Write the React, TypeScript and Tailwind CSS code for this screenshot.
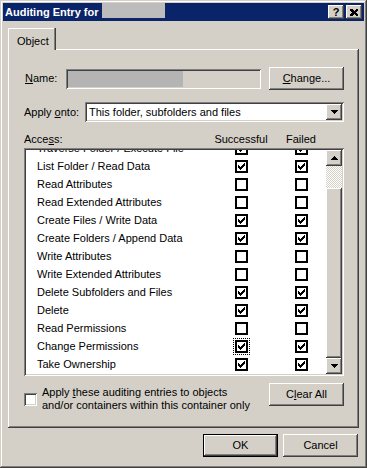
import React from "react";

type Row = { label: string; ok: boolean; fail: boolean; focus?: boolean };

const rows: Row[] = [
  { label: "Traverse Folder / Execute File", ok: true, fail: true },
  { label: "List Folder / Read Data", ok: true, fail: true },
  { label: "Read Attributes", ok: false, fail: false },
  { label: "Read Extended Attributes", ok: false, fail: false },
  { label: "Create Files / Write Data", ok: true, fail: true },
  { label: "Create Folders / Append Data", ok: true, fail: true },
  { label: "Write Attributes", ok: false, fail: false },
  { label: "Write Extended Attributes", ok: false, fail: false },
  { label: "Delete Subfolders and Files", ok: true, fail: true },
  { label: "Delete", ok: true, fail: true },
  { label: "Read Permissions", ok: false, fail: false },
  { label: "Change Permissions", ok: true, fail: true, focus: true },
  { label: "Take Ownership", ok: true, fail: true },
];

// classic 3d edges
const raised = "shadow-[inset_-1px_-1px_#404040,inset_1px_1px_#ffffff,inset_-2px_-2px_#808080]";
const sunken = "shadow-[inset_1px_1px_#808080,inset_-1px_-1px_#ffffff,inset_2px_2px_#404040,inset_-2px_-2px_#d4d0c8]";

function Check() {
  return (
    <svg width="7" height="7" viewBox="0 0 7 7" shapeRendering="crispEdges">
      <path d="M0 2h1v1h1v1h1v-1h1v-1h1v-1h1v-1h1v3h-1v1h-1v1h-1v1h-1v1h-1v-1h-1v-1h-1z" fill="#000" />
    </svg>
  );
}

function Arrow({ up }: { up?: boolean }) {
  return (
    <svg width="7" height="4" viewBox="0 0 7 4" shapeRendering="crispEdges" className={up ? "rotate-180" : ""}>
      <path d="M0 0h7v1h-1v1h-1v1h-1v1h-1v-1h-1v-1h-1v-1h-1z" fill="#000" />
    </svg>
  );
}

function Box({ checked, focus }: { checked: boolean; focus?: boolean }) {
  return (
    <span
      className={`flex w-[13px] h-[13px] border-2 border-black bg-white items-center justify-center ${
        focus ? "outline-1 outline-dotted outline-black outline-offset-1" : ""
      }`}
    >
      {checked && <Check />}
    </span>
  );
}

function Btn({ children, def }: { children: React.ReactNode; def?: boolean }) {
  return (
    <div
      className={`w-[75px] h-[23px] flex items-center justify-center bg-[#d4d0c8] ${raised} ${
        def ? "border border-black" : ""
      }`}
    >
      {children}
    </div>
  );
}

const U = ({ c }: { c: string }) => <span className="underline underline-offset-[1px]">{c}</span>;

export default function App() {
  return (
    <div className="w-[367px] h-[468px] bg-[#d4d0c8] p-[3px] flex flex-col overflow-hidden text-[11px] leading-[13px] text-black [font-family:'Liberation_Sans',Arial,sans-serif] shadow-[inset_-1px_-1px_#404040,inset_1px_1px_#d4d0c8,inset_-2px_-2px_#808080,inset_2px_2px_#ffffff]">
      {/* title bar */}
      <div className="h-[18px] bg-[#0a246a] flex items-start pl-[2px] pr-[2px]">
        <span className="font-bold text-white mt-[3px]">Auditing Entry for</span>
        <span className="ml-[3px] w-[63px] h-[15px] bg-[#bcbcbc]" />
        <div className="ml-auto mt-[2px] flex gap-[2px]">
          <div className={`w-[16px] h-[14px] bg-[#d4d0c8] flex items-center justify-center font-bold text-[11px] ${raised}`}>?</div>
          <div className={`w-[16px] h-[14px] bg-[#d4d0c8] flex items-center justify-center ${raised}`}>
            <svg width="8" height="7" viewBox="0 0 8 7" shapeRendering="crispEdges">
              <path d="M0 0h2l2 2l2-2h2v1l-2 2.5l2 2.5v1h-2l-2-2l-2 2h-2v-1l2-2.5l-2-2.5z" fill="#000" />
            </svg>
          </div>
        </div>
      </div>

      {/* body */}
      <div className="flex flex-col pl-[5px] pr-[5px] pt-[7px]">
        <div className="relative z-10 w-[48px] h-[22px] -mb-[1px] bg-[#d4d0c8] pl-[9px] pt-[7px] shadow-[inset_-1px_0_#404040,inset_-2px_0_#808080,inset_1px_1px_#ffffff]">
          Object
        </div>
        <div className="h-[379px] flex flex-col pl-[16px] pr-[15px] pt-[18px] shadow-[inset_-1px_-1px_#404040,inset_1px_1px_#ffffff,inset_-2px_-2px_#808080]">
          {/* name */}
          <div className="flex items-center h-[23px]">
            <span className="w-[42px] pl-[1px]">
              <U c="N" />ame:
            </span>
            <div className={`w-[195px] h-[20px] bg-[#d4d0c8] p-[2px] ${sunken}`}>
              <div className="w-[115px] h-[16px] bg-[#b4b4b4]" />
            </div>
            <div className="ml-auto">
              <Btn>
                <U c="C" />hange...
              </Btn>
            </div>
          </div>

          {/* apply onto */}
          <div className="flex items-center h-[20px] mt-[12px]">
            <span className="w-[61px]">
              Apply <U c="o" />nto:
            </span>
            <div className={`flex-1 h-[20px] bg-white flex items-center pl-[4px] pr-[2px] ${sunken}`}>
              <span>This folder, subfolders and files</span>
              <div className={`ml-auto w-[16px] h-[16px] bg-[#d4d0c8] flex items-center justify-center ${raised}`}>
                <Arrow />
              </div>
            </div>
          </div>

          {/* header */}
          <div className="flex items-center h-[14px] mt-[10px]">
            <span className="w-[197px]">
              Acce<U c="s" />s:
            </span>
            <span className="w-[40px] flex justify-center whitespace-nowrap">Successful</span>
            <span className="w-[40px] ml-[20px] flex justify-center whitespace-nowrap">Failed</span>
          </div>

          {/* list */}
          <div className={`mt-[2px] h-[228px] bg-white p-[2px] flex ${sunken}`}>
            <div className="flex-1 overflow-hidden">
              <div className="-mt-[11px]">
                {rows.map((r) => (
                  <div key={r.label} className="flex h-[18px] items-center">
                    <span className="w-[195px] pl-[11px] whitespace-nowrap">{r.label}</span>
                    <span className="w-[40px] flex justify-center">
                      <Box checked={r.ok} focus={r.focus} />
                    </span>
                    <span className="w-[40px] ml-[20px] flex justify-center">
                      <Box checked={r.fail} />
                    </span>
                  </div>
                ))}
              </div>
            </div>
            <div className="w-[16px] flex flex-col">
              <div className={`h-[16px] bg-[#d4d0c8] flex items-center justify-center ${raised}`}>
                <Arrow up />
              </div>
              <div className="h-[22px] bg-[image:repeating-conic-gradient(#ffffff_0_25%,#d4d0c8_0_50%)] bg-size-[2px_2px]" />
              <div className={`flex-1 bg-[#d4d0c8] ${raised}`} />
              <div className={`h-[16px] bg-[#d4d0c8] flex items-center justify-center ${raised}`}>
                <Arrow />
              </div>
            </div>
          </div>

          {/* bottom */}
          <div className="flex items-start mt-[7px]">
            <div className="flex items-center gap-[5px] pt-[3px]">
              <span className={`w-[13px] h-[13px] bg-white shrink-0 ${sunken}`} />
              <span>
                Apply <U c="t" />hese auditing entries to objects
                <br />
                and/or containers within this container only
              </span>
            </div>
            <div className="ml-auto">
              <Btn>
                C<U c="l" />ear All
              </Btn>
            </div>
          </div>
        </div>
      </div>

      {/* dialog buttons */}
      <div className="flex justify-end gap-[5px] pr-[6px] mt-[6px]">
        <Btn def>OK</Btn>
        <Btn>Cancel</Btn>
      </div>
    </div>
  );
}
